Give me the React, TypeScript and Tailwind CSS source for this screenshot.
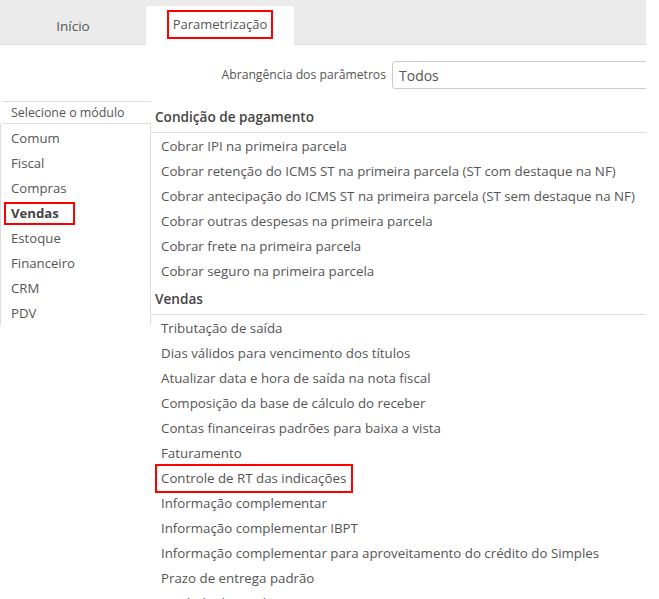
const modules = ['Comum', 'Fiscal', 'Compras', 'Vendas', 'Estoque', 'Financeiro', 'CRM', 'PDV']

const sections = [
  {
    title: 'Condição de pagamento',
    items: [
      'Cobrar IPI na primeira parcela',
      'Cobrar retenção do ICMS ST na primeira parcela (ST com destaque na NF)',
      'Cobrar antecipação do ICMS ST na primeira parcela (ST sem destaque na NF)',
      'Cobrar outras despesas na primeira parcela',
      'Cobrar frete na primeira parcela',
      'Cobrar seguro na primeira parcela',
    ],
  },
  {
    title: 'Vendas',
    items: [
      'Tributação de saída',
      'Dias válidos para vencimento dos títulos',
      'Atualizar data e hora de saída na nota fiscal',
      'Composição da base de cálculo do receber',
      'Contas financeiras padrões para baixa a vista',
      'Faturamento',
      'Controle de RT das indicações',
      'Informação complementar',
      'Informação complementar IBPT',
      'Informação complementar para aproveitamento do crédito do Simples',
      'Prazo de entrega padrão',
      'Unidade de venda',
    ],
  },
]

export default function App() {
  return (
    <div className="h-[599px] w-[659px] overflow-hidden bg-white font-['Open_Sans',sans-serif] text-[13px] text-[#555]">
      <div className="w-[646px]">
        {/* Tabs */}
        <div className="flex h-[45px] items-end border-b border-[#ddd] bg-[#ebebeb]">
          <div className="flex h-[38px] w-[146px] items-center justify-center pt-[2px] text-[13.5px]">Início</div>
          <div className="-mb-px flex h-[39px] w-[148px] items-start justify-center rounded-t-[3px] bg-white pt-[4px]">
            <span className="border-2 border-[#f00] px-[4px] leading-[25px]">Parametrização</span>
          </div>
        </div>

        {/* Filter */}
        <div className="mt-[16px] flex items-center justify-end gap-[6px] overflow-hidden">
          <span className="text-[12.2px]">Abrangência dos parâmetros</span>
          <div className="-mr-[12px] flex h-[28px] w-[266px] shrink-0 items-center rounded-[3px] border border-[#ccc] px-[6px] text-[14px]">
            Todos
          </div>
        </div>

        <div className="mt-[12px] flex">
          {/* Modules */}
          <div className="w-[151px] shrink-0">
            <div className="ml-[2px] h-[23px] border-t border-b border-[#ddd] pl-[9px] text-[12.4px] leading-[21px]">
              Selecione o módulo
            </div>
            <ul className="border-r border-l border-[#ddd] pt-px">
              {modules.map((m) => (
                <li key={m} className="h-[25px] pl-[10px] text-[13.2px] leading-[27px]">
                  {m === 'Vendas' ? (
                    <span className="-ml-[7px] inline-block border-2 border-[#f00] pr-[14px] pl-[5px] font-bold leading-[19px] text-[#444]">
                      {m}
                    </span>
                  ) : (
                    m
                  )}
                </li>
              ))}
            </ul>
          </div>

          {/* Parameters */}
          <div className="flex-1">
            {sections.map((s) => (
              <div key={s.title}>
                <div className="h-[32px] border-b border-[#ddd] pl-[4px] pt-[1px] text-[13.6px] font-semibold leading-[30px] text-[#444]">
                  {s.title}
                </div>
                {s.items.map((it) => (
                  <div key={it} className="h-[25px] pl-[10px] text-[13.3px] leading-[27px] whitespace-nowrap">
                    {it === 'Controle de RT das indicações' ? (
                      <span className="-my-[2px] -ml-[6px] inline-block border-2 border-[#f00] pr-[5px] pl-[4px] leading-[25px]">
                        {it}
                      </span>
                    ) : (
                      it
                    )}
                  </div>
                ))}
              </div>
            ))}
          </div>
        </div>
      </div>
    </div>
  )
}
